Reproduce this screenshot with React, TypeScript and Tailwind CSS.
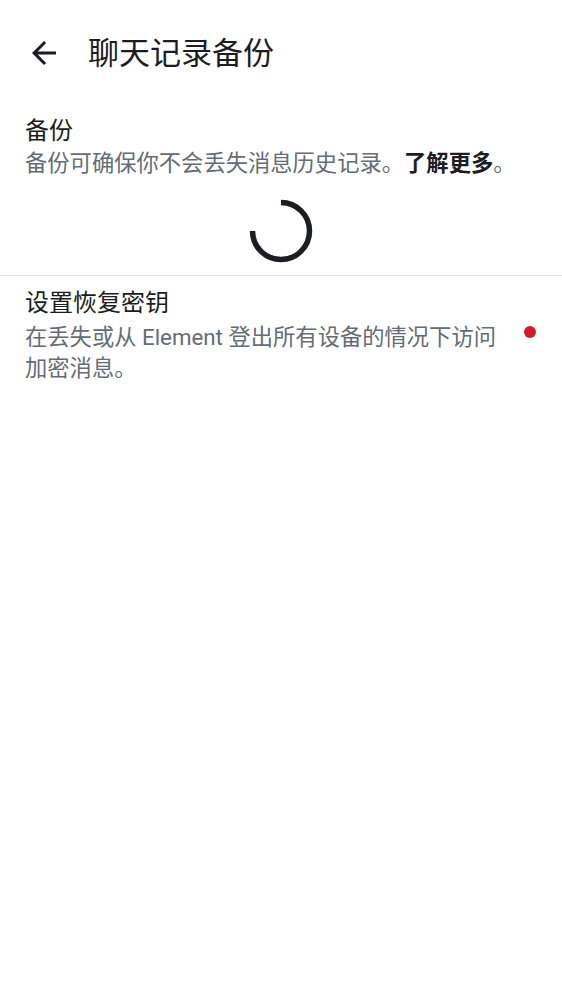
const font = { fontFamily: "Roboto, 'Noto Sans CJK SC', sans-serif" };

function BackArrow() {
  return (
    <svg width="36" height="36" viewBox="0 0 24 24" fill="#1b1d22" className="block">
      <path d="M20 11H7.83l5.59-5.59L12 4l-8 8 8 8 1.41-1.41L7.83 13H20v-2z" />
    </svg>
  );
}

function Spinner() {
  return (
    <svg width="64" height="64" viewBox="0 0 64 64" className="block">
      <path
        d="M32 3.5 A28.5 28.5 0 1 1 3.5 32"
        fill="none"
        stroke="#1b1d22"
        strokeWidth="5.5"
      />
    </svg>
  );
}

export default function App() {
  return (
    <div className="min-h-screen w-full bg-white text-[#1b1d22]" style={font}>
      <header className="flex h-[100px] items-center pt-[6px]">
        <button className="ml-[26px] flex h-9 w-9 items-center justify-center">
          <BackArrow />
        </button>
        <h1 className="ml-[26px] text-[31px] leading-none">聊天记录备份</h1>
      </header>

      <section className="px-[25px] pt-[15px]">
        <h2 className="text-[24px] leading-[32px]">备份</h2>
        <p className="mt-[1px] text-[22.3px] leading-[30px] text-[#656c76]">
          备份可确保你不会丢失消息历史记录。
          <span className="font-semibold text-[#1b1d22]">了解更多</span>。
        </p>
      </section>

      <div className="flex justify-center pt-[21px] pb-[12px]">
        <Spinner />
      </div>

      <div className="h-px w-full bg-[#e1e3e6]" />

      <section className="flex items-start pl-[25px] pr-[26px] pt-[11px]">
        <div className="flex-1 pr-[22px]">
          <h2 className="text-[24px] leading-[32px]">设置恢复密钥</h2>
          <p className="mt-[3px] text-[22.3px] leading-[31px] text-[#656c76]">
            在丢失或从 Element 登出所有设备的情况下访问加密消息。
          </p>
        </div>
        <span className="mt-[39px] h-3 w-3 rounded-full bg-[#d51928]" />
      </section>
    </div>
  );
}
